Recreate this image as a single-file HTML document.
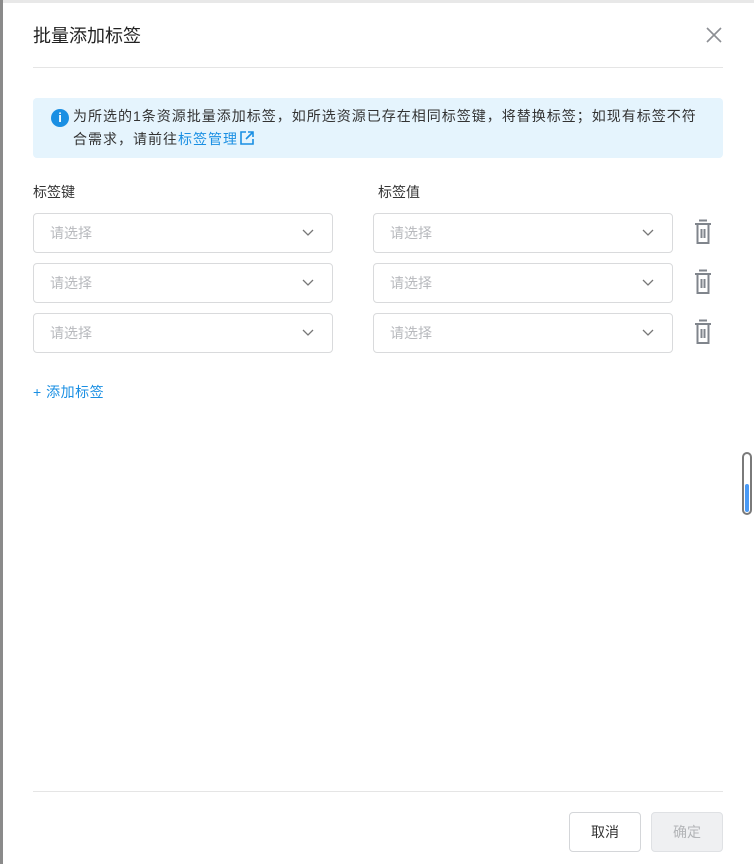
<!DOCTYPE html>
<html><head><meta charset="utf-8"><style>
*{box-sizing:border-box;margin:0;padding:0}
body{width:754px;height:864px;background:#fff;font-family:"Liberation Sans","Noto Sans CJK SC",sans-serif;position:relative;overflow:hidden;color:#333}
.abs{position:absolute}
.left{left:0;top:0;width:3px;height:864px;background:#8a8a8a}
.topline{left:0;top:0;width:754px;height:3px;background:#e8e8e8}
.modal{left:3px;top:3px;width:751px;height:861px;background:#fff;border-top-left-radius:8px}
.title{left:33px;top:22px;font-size:18px;color:#222}
.hr{height:1px;background:#e5e5e5;left:33px;width:690px}
.info{left:33px;top:98px;width:690px;height:60px;background:#e5f4fd;border-radius:4px}
.info .t{position:absolute;left:40px;top:7px;font-size:14px;line-height:23px;color:#333;white-space:nowrap;letter-spacing:1px}
.ic{left:51px;top:109px;width:18px;height:18px;border-radius:50%;background:#1a8fe3;color:#fff;font-size:13px;font-weight:bold;text-align:center;line-height:18px}
a{color:#1a8fe3;text-decoration:none}
.lbl{font-size:14px;color:#333;top:182px}
.sel{width:300px;height:40px;border:1px solid #d9dadc;border-radius:4px}
.sel span{position:absolute;left:16px;top:9px;font-size:14px;color:#b7b9bd}
.sel svg{position:absolute;right:18px;top:15px}
.trash{left:693px}
.btn{top:812px;width:72px;height:40px;border-radius:4px;font-size:14px;text-align:center;line-height:38px}
</style></head><body>
<div class="abs topline"></div>
<div class="abs modal"></div>
<div class="abs left"></div>
<div class="abs title">批量添加标签</div>
<svg class="abs" style="left:705px;top:26px" width="18" height="18"><path d="M2 2L16 16M16 2L2 16" stroke="#8c8f94" stroke-width="1.6"/></svg>
<div class="abs hr" style="top:67px"></div>
<div class="abs info"><div class="t">为所选的1条资源批量添加标签，如所选资源已存在相同标签键，将替换标签；如现有标签不符<br>合需求，请前往<a>标签管理<svg width="16" height="16" viewBox="0 0 16 16" style="vertical-align:-2px;margin-left:1px"><path d="M7 2H2v12h12V9M9 2h5v5M14 2L7 9" stroke="#1a8fe3" stroke-width="1.6" fill="none"/></svg></a></div></div>
<div class="abs ic">i</div>
<div class="abs lbl" style="left:33px">标签键</div>
<div class="abs lbl" style="left:378px">标签值</div>
<div class="abs sel" style="left:33px;top:213px"><span>请选择</span><svg width="12" height="8"><path d="M1 1l5 5 5-5" stroke="#777" stroke-width="1.3" fill="none"/></svg></div>
<div class="abs sel" style="left:373px;top:213px"><span>请选择</span><svg width="12" height="8"><path d="M1 1l5 5 5-5" stroke="#777" stroke-width="1.3" fill="none"/></svg></div>
<div class="abs sel" style="left:33px;top:263px"><span>请选择</span><svg width="12" height="8"><path d="M1 1l5 5 5-5" stroke="#777" stroke-width="1.3" fill="none"/></svg></div>
<div class="abs sel" style="left:373px;top:263px"><span>请选择</span><svg width="12" height="8"><path d="M1 1l5 5 5-5" stroke="#777" stroke-width="1.3" fill="none"/></svg></div>
<div class="abs sel" style="left:33px;top:313px"><span>请选择</span><svg width="12" height="8"><path d="M1 1l5 5 5-5" stroke="#777" stroke-width="1.3" fill="none"/></svg></div>
<div class="abs sel" style="left:373px;top:313px"><span>请选择</span><svg width="12" height="8"><path d="M1 1l5 5 5-5" stroke="#777" stroke-width="1.3" fill="none"/></svg></div>
<svg class="abs trash" style="top:219px" width="20" height="26"><path d="M6 1.5h8M2 5h16M4.5 5v19h11V5M8.5 10v9M11.5 10v9" stroke="#80858c" stroke-width="2" fill="none"/></svg>
<svg class="abs trash" style="top:269px" width="20" height="26"><path d="M6 1.5h8M2 5h16M4.5 5v19h11V5M8.5 10v9M11.5 10v9" stroke="#80858c" stroke-width="2" fill="none"/></svg>
<svg class="abs trash" style="top:319px" width="20" height="26"><path d="M6 1.5h8M2 5h16M4.5 5v19h11V5M8.5 10v9M11.5 10v9" stroke="#80858c" stroke-width="2" fill="none"/></svg>
<div class="abs" style="left:33px;top:382px;font-size:14px;color:#1a8fe3;letter-spacing:0.5px">+ 添加标签</div>
<div class="abs" style="left:742px;top:452px;width:10px;height:63px;border:2px solid #7a7a7a;border-radius:5px;background:#fff"><div style="position:absolute;left:1px;right:1px;bottom:1px;height:28px;background:#4a9af5;border-radius:3px"></div></div>
<div class="abs hr" style="top:791px"></div>
<div class="abs btn" style="left:569px;border:1px solid #d4d6d9;color:#333">取消</div>
<div class="abs btn" style="left:651px;border:1px solid #dfe1e4;background:#eff0f2;color:#b3b5b8">确定</div>
</body></html>
